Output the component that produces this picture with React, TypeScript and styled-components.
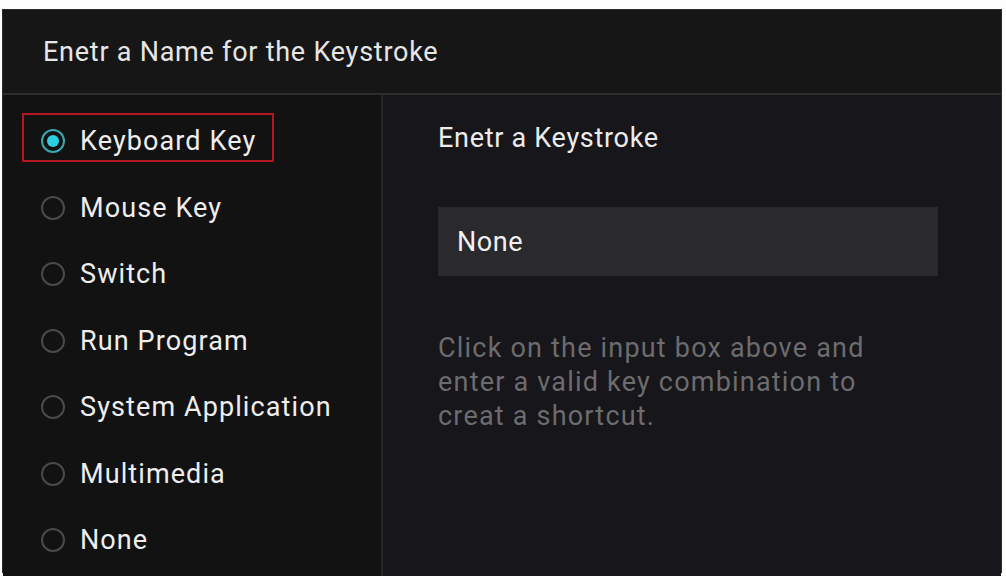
import React from "react";
import styled, { createGlobalStyle } from "styled-components";

const Global = createGlobalStyle`
  html, body { margin: 0; padding: 0; background: #fdfdfd; }
  body { font-family: Roboto, "Liberation Sans", sans-serif; }
`;

const Page = styled.div`
  width: 1006px;
  height: 576px;
  padding: 9px 4px 3px 2px;
  box-sizing: border-box;
`;

const Panel = styled.div`
  height: 100%;
  display: flex;
  flex-direction: column;
  background: #141416;
  border: 1px solid #2a2a2c;
  box-sizing: border-box;
`;

const Header = styled.div`
  height: 83px;
  display: flex;
  align-items: center;
  padding-left: 40px;
  background: #161616;
  border-bottom: 2px solid #2e2e30;
  color: #e6e6e6;
  font-size: 27px;
  letter-spacing: 0.75px;
  flex-shrink: 0;
`;

const Body = styled.div`
  flex: 1;
  display: grid;
  grid-template-columns: 380px 1fr;
`;

const Options = styled.div`
  display: flex;
  flex-direction: column;
  padding: 18px 0 0 19px;
  background: #121213;
  border-right: 2px solid #262628;
`;

const Option = styled.div<{ $selected?: boolean }>`
  display: flex;
  align-items: center;
  gap: 15px;
  height: 49px;
  width: 252px;
  padding: 7px 0 0 17px;
  margin-bottom: 17.5px;
  box-sizing: border-box;
  border: 2px solid ${(p) => (p.$selected ? "#b3161f" : "transparent")};
  color: #eeeeee;
  font-size: 27px;
  letter-spacing: 1.1px;
  white-space: nowrap;
`;

const Radio = styled.span<{ $selected?: boolean }>`
  width: 24px;
  height: 24px;
  flex-shrink: 0;
  border-radius: 50%;
  box-sizing: border-box;
  border: 2px solid ${(p) => (p.$selected ? "#3aa6b0" : "#4a4a4c")};
  display: flex;
  align-items: center;
  justify-content: center;
  &::after {
    content: "";
    display: ${(p) => (p.$selected ? "block" : "none")};
    width: 12px;
    height: 12px;
    border-radius: 50%;
    background: #2ad0e0;
  }
`;

const Detail = styled.div`
  display: flex;
  flex-direction: column;
  padding: 23px 0 0 55px;
  background: #17161a;
`;

const Title = styled.div`
  color: #ececec;
  font-size: 27px;
  letter-spacing: 0.7px;
  height: 40px;
  display: flex;
  align-items: center;
`;

const Field = styled.div`
  margin-top: 49px;
  width: 500px;
  height: 69px;
  background: #2a292e;
  display: flex;
  align-items: center;
  padding-left: 19px;
  box-sizing: border-box;
  color: #f0f0f0;
  font-size: 27px;
  letter-spacing: 0.6px;
`;

const Help = styled.p`
  margin: 55px 0 0;
  width: 460px;
  color: #6c6c6e;
  font-size: 27px;
  letter-spacing: 1.2px;
  line-height: 34px;
`;

const options = [
  "Keyboard Key",
  "Mouse Key",
  "Switch",
  "Run Program",
  "System Application",
  "Multimedia",
  "None",
];

export default function App() {
  return (
    <>
      <Global />
      <Page>
        <Panel>
          <Header>Enetr a Name for the Keystroke</Header>
          <Body>
            <Options>
              {options.map((o, i) => (
                <Option key={o} $selected={i === 0}>
                  <Radio $selected={i === 0} />
                  {o}
                </Option>
              ))}
            </Options>
            <Detail>
              <Title>Enetr a Keystroke</Title>
              <Field>None</Field>
              <Help>
                Click on the input box above and enter a valid key combination
                to creat a shortcut.
              </Help>
            </Detail>
          </Body>
        </Panel>
      </Page>
    </>
  );
}
